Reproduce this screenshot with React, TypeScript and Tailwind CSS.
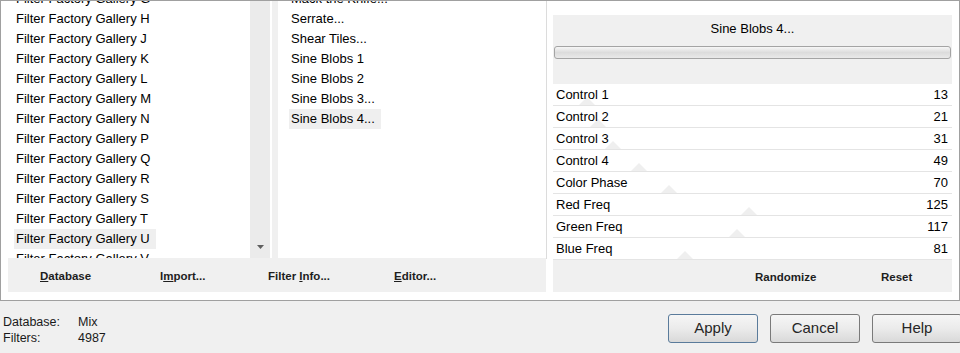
import React from "react";

const galleries = ["G", "H", "J", "K", "L", "M", "N", "P", "Q", "R", "S", "T", "U", "V"];

const filters = [
  "Mack the Knife...",
  "Serrate...",
  "Shear Tiles...",
  "Sine Blobs 1",
  "Sine Blobs 2",
  "Sine Blobs 3...",
  "Sine Blobs 4...",
];

const controls = [
  { label: "Control 1", value: 13 },
  { label: "Control 2", value: 21 },
  { label: "Control 3", value: 31 },
  { label: "Control 4", value: 49 },
  { label: "Color Phase", value: 70 },
  { label: "Red Freq", value: 125 },
  { label: "Green Freq", value: 117 },
  { label: "Blue Freq", value: 81 },
];

const ListItem = ({ text, selected }: { text: string; selected?: boolean }) => (
  <div className="h-[20px] leading-[20px]">
    <span
      className={`inline-block h-[20px] pl-[2px] pr-[6px] ${
        selected ? "bg-[#efefef]" : ""
      }`}
    >
      {text}
    </span>
  </div>
);

const BarButton = ({
  children,
  className,
}: {
  children: React.ReactNode;
  className: string;
}) => (
  <div className={`text-[11.5px] font-bold text-[#1e1e1e] ${className}`}>
    {children}
  </div>
);

const DialogButton = ({ label, isDefault }: { label: string; isDefault?: boolean }) => (
  <button
    className={`w-[90px] h-[29px] shrink-0 rounded-[3px] border bg-linear-to-b from-[#f6f6f6] via-[#ebebeb] to-[#d9d9d9] text-[15px] text-[#262626] ${
      isDefault ? "border-[#5a7b9b]" : "border-[#7a7a7a]"
    }`}
  >
    {label}
  </button>
);

export default function App() {
  return (
    <div className="w-[960px] h-[353px] overflow-hidden bg-[#f0f0f0] font-['Liberation_Sans',Arial,sans-serif] text-black">
      {/* main frame */}
      <div className="h-[301px] border border-[#a0a0a0] bg-white flex">
        {/* left: gallery + filter lists */}
        <div className="w-[545px] flex flex-col">
          <div className="h-[257px] flex text-[13px]">
            <div className="w-[249px] overflow-hidden">
              <div className="mt-[-12px] pl-[13px]">
                {galleries.map((g) => (
                  <ListItem key={g} text={`Filter Factory Gallery ${g}`} selected={g === "U"} />
                ))}
              </div>
            </div>
            <div className="w-[20px] bg-[#ebebeb] flex items-end justify-center pb-[9px]">
              <svg width="7" height="4" viewBox="0 0 7 4">
                <polygon points="0,0 7,0 3.5,4" fill="#5f5f5f" />
              </svg>
            </div>
            <div className="w-[2px] bg-white" />
            <div className="w-[6px] bg-[#f0f0f0]" />
            <div className="w-[268px] overflow-hidden">
              <div className="mt-[-12px] pl-[11px]">
                {filters.map((f) => (
                  <ListItem key={f} text={f} selected={f === "Sine Blobs 4..."} />
                ))}
              </div>
            </div>
          </div>
          <div className="ml-[7px] h-[34px] pt-[3px] bg-[#f0f0f0] flex items-center">
            <BarButton className="ml-[32px] w-[120px]">
              <span className="underline">D</span>atabase
            </BarButton>
            <BarButton className="w-[108px]">
              I<span className="underline">m</span>port...
            </BarButton>
            <BarButton className="w-[126px]">
              Filter <span className="underline">I</span>nfo...
            </BarButton>
            <BarButton className="w-[80px]">
              <span className="underline">E</span>ditor...
            </BarButton>
          </div>
        </div>

        <div className="w-[1px] h-[258px] bg-[#dcdcdc]" />
        <div className="w-[6px]" />

        {/* right: filter controls */}
        <div className="w-[399px] pt-[14px] flex flex-col">
          <div className="h-[69px] bg-[#f0f0f0] flex flex-col items-center pt-[6px]">
            <div className="text-[13px] leading-[16px]">Sine Blobs 4...</div>
            <div className="mt-[9px] w-[397px] h-[13px] rounded-[3px] border border-[#a4a4a4] bg-linear-to-b from-[#f7f7f7] via-[#dcdcdc] to-[#e9e9e9]" />
          </div>
          {controls.map((c) => (
            <div
              key={c.label}
              className="relative h-[22px] border-b border-[#e4e4e4] flex items-center justify-between pl-[3px] pr-[4px] text-[13px]"
            >
              <svg
                className="absolute bottom-0"
                style={{ left: 15 + (c.value / 255) * 369 - 8 }}
                width="16"
                height="8"
                viewBox="0 0 16 8"
              >
                <polygon points="0,8 8,0 16,8" fill="#efefef" />
              </svg>
              <span className="relative">{c.label}</span>
              <span className="relative">{c.value}</span>
            </div>
          ))}
          <div className="h-[32px] pt-[3px] bg-[#f0f0f0] flex items-center">
            <BarButton className="ml-[202px] w-[126px]">Randomize</BarButton>
            <BarButton className="w-[60px]">Reset</BarButton>
          </div>
        </div>
      </div>

      {/* status + dialog buttons */}
      <div className="flex">
        <div className="w-[668px] shrink-0 pl-[3px] pt-[13px] text-[12.5px] leading-[16px] text-[#1a1a1a]">
          <div className="flex">
            <span className="w-[75px]">Database:</span>
            <span>Mix</span>
          </div>
          <div className="flex">
            <span className="w-[75px]">Filters:</span>
            <span>4987</span>
          </div>
        </div>
        <div className="pt-[13px] flex gap-[12px]">
          <DialogButton label="Apply" isDefault />
          <DialogButton label="Cancel" />
          <DialogButton label="Help" />
        </div>
      </div>
    </div>
  );
}
